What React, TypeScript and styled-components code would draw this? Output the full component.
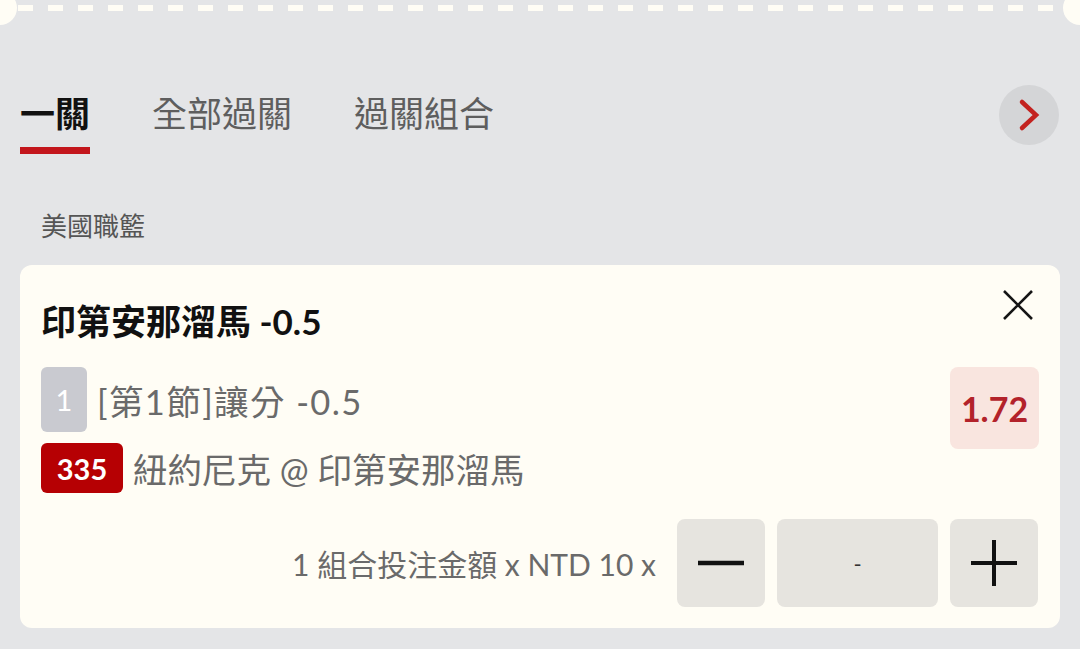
import React from "react";
import styled, { createGlobalStyle } from "styled-components";

const GlobalStyle = createGlobalStyle`
  html, body {
    margin: 0;
    padding: 0;
    background: #e4e5e7;
  }
  body {
    font-family: Lato, "Noto Sans CJK TC", sans-serif;
  }
`;

const CREAM = "#fffdf5";

const Page = styled.div`
  width: 1080px;
  height: 649px;
  overflow: hidden;
  background: #e4e5e7;
  display: flex;
  flex-direction: column;
`;

const Perforation = styled.div`
  display: flex;
  height: 25px;
  overflow: hidden;
`;

type ScallopProps = { side: "left" | "right" };

const Scallop = styled.div<ScallopProps>`
  width: 17px;
  height: 34px;
  margin-top: -9px;
  background: ${CREAM};
  border-radius: ${(p) => (p.side === "left" ? "0 17px 17px 0" : "17px 0 0 17px")};
  flex-shrink: 0;
`;

const Dashes = styled.div`
  flex: 1;
  height: 6px;
  margin-top: 5px;
  background: repeating-linear-gradient(
    to right,
    transparent 0 1px,
    ${CREAM} 1px 16px,
    transparent 16px 30px
  );
`;

const TabBar = styled.div`
  display: flex;
  align-items: flex-start;
  justify-content: space-between;
  padding: 0 21px 0 20px;
  margin-top: 65px;
`;

const Tabs = styled.div`
  display: flex;
  gap: 62px;
`;

type TabProps = { active?: boolean };

const Tab = styled.div<TabProps>`
  display: flex;
  flex-direction: column;
  gap: 11px;
  font-size: 35px;
  line-height: 46px;
  font-weight: ${(p) => (p.active ? 700 : 400)};
  color: ${(p) => (p.active ? "#111" : "#5e5e5e")};
  white-space: nowrap;
`;

const Underline = styled.div<TabProps>`
  height: 7px;
  background: ${(p) => (p.active ? "#c3161c" : "transparent")};
`;

const NextButton = styled.div`
  width: 60px;
  height: 60px;
  margin-top: -5px;
  border-radius: 50%;
  background: #d4d5d7;
  display: flex;
  align-items: center;
  justify-content: center;
`;

const League = styled.div`
  margin-top: 54px;
  padding-left: 41px;
  font-size: 26px;
  line-height: 36px;
  color: #555;
`;

const Card = styled.div`
  margin: 21px 20px 0;
  background: ${CREAM};
  border-radius: 12px;
  padding: 20px 22px 21px 21px;
  display: flex;
  flex-direction: column;
`;

const CardHeader = styled.div`
  display: flex;
  justify-content: space-between;
  align-items: flex-start;
  margin-bottom: 26px;
`;

const Title = styled.div`
  margin-top: 16px;
  font-size: 35px;
  line-height: 40px;
  font-weight: 700;
  color: #111;
`;

const CloseButton = styled.div`
  width: 40px;
  height: 40px;
  display: flex;
  align-items: center;
  justify-content: center;
`;

const CardBody = styled.div`
  display: flex;
  justify-content: space-between;
  align-items: flex-start;
  margin-right: -1px;
`;

const Lines = styled.div`
  display: flex;
  flex-direction: column;
  gap: 11px;
`;

type LineProps = { spaced?: boolean };

const Line = styled.div<LineProps>`
  display: flex;
  align-items: center;
  gap: 10px;
  font-size: 34.5px;
  color: #6a6a6a;
  white-space: nowrap;
  letter-spacing: ${(p) => (p.spaced ? "1.4px" : "0")};
`;

type BadgeProps = { tone: "grey" | "red" };

const Badge = styled.div<BadgeProps>`
  display: flex;
  align-items: center;
  justify-content: center;
  height: ${(p) => (p.tone === "grey" ? "65px" : "50px")};
  min-width: ${(p) => (p.tone === "grey" ? "46px" : "82px")};
  border-radius: 6px;
  background: ${(p) => (p.tone === "grey" ? "#c9cad0" : "#b60003")};
  color: #fff;
  font-size: ${(p) => (p.tone === "grey" ? "29px" : "29px")};
  font-weight: ${(p) => (p.tone === "grey" ? 400 : 700)};
  letter-spacing: 0;
`;

const Odds = styled.div`
  width: 89px;
  height: 82px;
  border-radius: 8px;
  background: #f9e5df;
  color: #b3222a;
  font-size: 34px;
  font-weight: 700;
  display: flex;
  align-items: center;
  justify-content: center;
`;

const Footer = styled.div`
  display: flex;
  justify-content: flex-end;
  align-items: center;
  margin-top: 26px;
`;

const StakeText = styled.div`
  font-size: 30px;
  color: #6a6a6a;
  margin-right: 21px;
  white-space: nowrap;
`;

const Stepper = styled.div`
  display: flex;
  gap: 12px;
`;

type StepProps = { wide?: boolean };

const StepBox = styled.div<StepProps>`
  width: ${(p) => (p.wide ? "161px" : "88px")};
  height: 88px;
  border-radius: 8px;
  background: #e6e4df;
  display: flex;
  align-items: center;
  justify-content: center;
  font-size: 22px;
  color: #333;
`;

const Chevron = () => (
  <svg width="24" height="34" viewBox="0 0 24 34">
    <polyline
      points="5,4 19,17 5,30"
      fill="none"
      stroke="#c3221f"
      strokeWidth="4.5"
      strokeLinecap="round"
      strokeLinejoin="miter"
    />
  </svg>
);

const Cross = () => (
  <svg width="32" height="32" viewBox="0 0 32 32">
    <path d="M2 2 L30 30 M30 2 L2 30" stroke="#151515" strokeWidth="2.6" />
  </svg>
);

const Minus = () => (
  <svg width="46" height="46" viewBox="0 0 46 46">
    <path d="M0 23 H46" stroke="#111" strokeWidth="4.5" />
  </svg>
);

const Plus = () => (
  <svg width="46" height="46" viewBox="0 0 46 46">
    <path d="M0 23 H46 M23 0 V46" stroke="#111" strokeWidth="4" />
  </svg>
);

const tabs = ["一關", "全部過關", "過關組合"];

const App = () => {
  return (
    <Page>
      <GlobalStyle />
      <Perforation>
        <Scallop side="left" />
        <Dashes />
        <Scallop side="right" />
      </Perforation>

      <TabBar>
        <Tabs>
          {tabs.map((t, i) => (
            <Tab key={t} active={i === 0}>
              {t}
              <Underline active={i === 0} />
            </Tab>
          ))}
        </Tabs>
        <NextButton>
          <Chevron />
        </NextButton>
      </TabBar>

      <League>美國職籃</League>

      <Card>
        <CardHeader>
          <Title>印第安那溜馬 -0.5</Title>
          <CloseButton>
            <Cross />
          </CloseButton>
        </CardHeader>

        <CardBody>
          <Lines>
            <Line spaced>
              <Badge tone="grey">1</Badge>
              [第1節]讓分 -0.5
            </Line>
            <Line>
              <Badge tone="red">335</Badge>
              紐約尼克 @ 印第安那溜馬
            </Line>
          </Lines>
          <Odds>1.72</Odds>
        </CardBody>

        <Footer>
          <StakeText>1 組合投注金額 x NTD 10 x</StakeText>
          <Stepper>
            <StepBox>
              <Minus />
            </StepBox>
            <StepBox wide>-</StepBox>
            <StepBox>
              <Plus />
            </StepBox>
          </Stepper>
        </Footer>
      </Card>
    </Page>
  );
};

export default App;
